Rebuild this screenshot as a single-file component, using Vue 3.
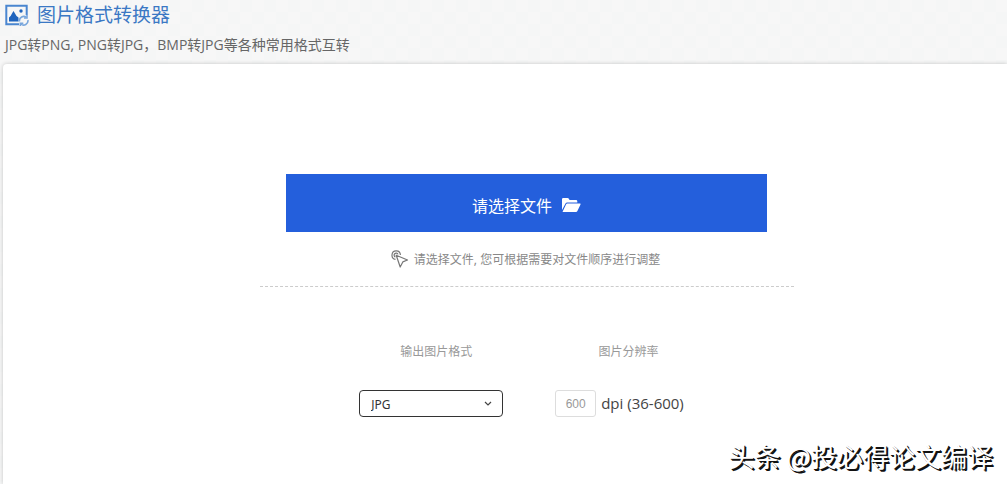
<script setup>
import { ref } from 'vue'

const format = ref('JPG')
const dpi = ref('600')
const formats = ['JPG', 'PNG', 'BMP']
</script>

<template>
  <div class="page">
    <header class="head">
      <div class="title-row">
        <svg class="logo" viewBox="0 0 24 22" aria-hidden="true">
          <path d="M14 20.3H1.3V1.7h20.4V11" fill="none" stroke="#4a86d0" stroke-width="2" />
          <path d="M4 17.500v-4q2-1.500 3-4l1.500-2.500L10 9.500q1 2.500 3.500 4v4z" fill="#1f64bd" />
          <circle cx="16" cy="7" r="1.700" fill="#1f64bd" />
          <g fill="none" stroke="#78a6dc" stroke-width="1.600">
            <path d="M14.500 17.500a4.300 4.300 0 0 1 7-4M22.900 16a4.300 4.300 0 0 1-7 4" />
            <path d="M22 10.800v3.200h-3M15.300 22v-2.700h3" />
          </g>
        </svg>
        <h1>图片格式转换器</h1>
      </div>
      <p class="intro">JPG转PNG, PNG转JPG，BMP转JPG等各种常用格式互转</p>
    </header>

    <main class="panel">
      <section class="upload">
        <button class="choose" type="button">
          <span>请选择文件</span>
          <svg class="folder" viewBox="0 0 20 16" aria-hidden="true">
            <path d="M1 13V2.300Q1 1 2.300 1h4.200Q7.500 1 8 2l.5 1H15q1.300 0 1.300 1.300V5.500H6.200q-1.200 0-1.700 1z" fill="#fff" />
            <path d="M1.500 15 5 7.500q.4-.9 1.400-.9H19q.9 0 .5.900l-3.100 6.600q-.4.900-1.400.900z" fill="#fff" />
          </svg>
        </button>
        <p class="hint">
          <svg class="pointer" viewBox="0 0 18 18" aria-hidden="true" fill="none" stroke="#777" stroke-width="1.200" stroke-linejoin="round">
            <path d="M4.500 9.300A4.200 4.200 0 1 1 9.400 5" />
            <path d="M4.400 7A2 2 0 1 1 7 4.400" />
            <path d="M5.200 5.200 16.500 10l-4.700 1.900L9.200 17z" />
          </svg>
          <span>请选择文件, 您可根据需要对文件顺序进行调整</span>
        </p>
      </section>

      <form class="options" @submit.prevent>
        <div class="field">
          <label for="format">输出图片格式</label>
          <div class="select-wrap">
            <select id="format" v-model="format">
              <option v-for="f in formats" :key="f">{{ f }}</option>
            </select>
            <svg class="chevron" viewBox="0 0 8 6" aria-hidden="true">
              <path d="M1 1l3 3 3-3" fill="none" stroke="#444" stroke-width="1.200" />
            </svg>
          </div>
        </div>
        <div class="field dpi">
          <label for="dpi">图片分辨率</label>
          <div class="dpi-row">
            <input id="dpi" v-model="dpi" type="text" inputmode="numeric" />
            <span>dpi (36-600)</span>
          </div>
        </div>
      </form>
    </main>

    <div class="credit">头条 @投必得论文编译</div>
  </div>
</template>

<style>
body {
  background: #f6f7f7;
}
</style>

<style scoped>
.page {
  position: relative;
  display: flex;
  flex-direction: column;
  min-height: 100vh;
  overflow: hidden;
  background: repeating-conic-gradient(#f7f7f7 0 25%, #f5f6f6 0 50%) 0 0 / 24px 24px;
  font-family: "Noto Sans", "Noto Sans CJK SC", sans-serif;
  color: #555;
}
.head {
  height: 64px;
  padding-left: 5px;
}
.title-row {
  display: flex;
  align-items: center;
  gap: 8px;
  height: 30px;
}
.logo {
  width: 24px;
  height: 22px;
}
h1 {
  margin: 0;
  font-size: 19px;
  font-weight: 400;
  line-height: 28px;
  color: #3b78c4;
}
.intro {
  margin: 5px 0 0;
  font-family: "Open Sans", "Noto Sans CJK SC", sans-serif;
  font-size: 14px;
  line-height: 20px;
  color: #666;
}
.panel {
  flex: 1;
  display: flex;
  flex-direction: column;
  align-items: center;
  margin-left: 3px;
  padding: 110px 0 24px 43px;
  background: #fff;
  border-radius: 4px 0 0 0;
  box-shadow: 0 0 4px rgba(0, 0, 0, 0.2);
}
.upload {
  display: flex;
  flex-direction: column;
  align-items: center;
  width: 100%;
  max-width: 534px;
  border-bottom: 1px dashed #ccc;
}
.choose {
  display: flex;
  align-items: center;
  justify-content: center;
  gap: 9px;
  width: 90%;
  height: 58px;
  padding: 4px 0 0;
  border: 0;
  background: #245fdc;
  color: #fff;
  font: inherit;
  font-size: 16px;
}
.folder {
  width: 20px;
  height: 16px;
}
.hint {
  display: flex;
  align-items: center;
  gap: 5px;
  height: 54px;
  margin: 0;
  padding-right: 2px;
  font-size: 12px;
  color: #888;
}
.pointer {
  width: 18px;
  height: 18px;
}
.options {
  display: flex;
  gap: 52px;
  margin-top: 55px;
  padding-right: 10px;
}
.field {
  display: flex;
  flex-direction: column;
  gap: 28px;
}
.field label {
  padding-left: 10px;
  font-size: 12px;
  line-height: 20px;
  text-align: center;
  color: #999;
}
.select-wrap {
  position: relative;
}
select {
  appearance: none;
  width: 144px;
  height: 27px;
  padding: 2px 24px 0 11px;
  border: 1px solid #333;
  border-radius: 4px;
  background: #fff;
  color: #333;
  font: inherit;
  font-size: 12px;
}
.chevron {
  position: absolute;
  top: 11px;
  right: 11px;
  width: 8px;
  height: 6px;
  pointer-events: none;
}
.dpi label {
  padding-left: 18px;
}
.dpi-row {
  display: flex;
  align-items: center;
  gap: 5px;
  font-family: "Open Sans", "Noto Sans", sans-serif;
  font-size: 15px;
  line-height: 27px;
  color: #444;
}
input {
  box-sizing: border-box;
  width: 41px;
  height: 27px;
  padding: 0;
  border: 1px solid #ddd;
  border-radius: 3px;
  background: #fff;
  color: #999;
  font-family: "Liberation Sans", Arial, sans-serif;
  font-size: 12px;
  text-align: center;
}
.credit {
  position: absolute;
  right: 14px;
  bottom: 10px;
  font-family: "Noto Sans CJK SC", sans-serif;
  font-size: 26px;
  line-height: 36px;
  color: #fff;
  text-shadow: 1px 1px 0 #111, 2px 2px 0 #111;
}
</style>
